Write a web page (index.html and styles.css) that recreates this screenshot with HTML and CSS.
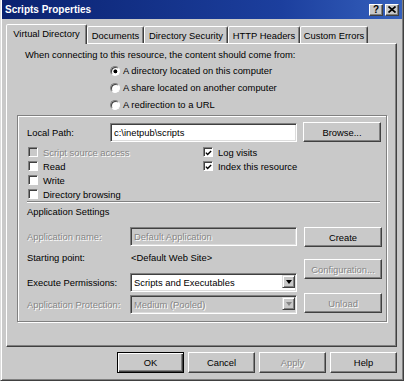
FILE: index.html
```html
<!DOCTYPE html>
<html lang="en">
<head>
    <meta charset="UTF-8">
    <title>Scripts Properties</title>
    <link rel="stylesheet" href="styles.css">
</head>
<body>
    <div class="window">
        <div class="titlebar">
            <span class="title">Scripts Properties</span>
            <div class="caption">
                <span class="cap-btn">?</span>
                <span class="cap-btn">
                    <svg width="8" height="7" viewBox="0 0 8 7"><path d="M0.5 0.5 L7.5 6.5 M7.5 0.5 L0.5 6.5" stroke="#000" stroke-width="1.7"/></svg>
                </span>
            </div>
        </div>

        <div class="client">
            <div class="tabs">
                <div class="tab active w-virtual">Virtual Directory</div>
                <div class="tab w-docs">Documents</div>
                <div class="tab w-security">Directory Security</div>
                <div class="tab w-http">HTTP Headers</div>
                <div class="tab w-errors">Custom Errors</div>
            </div>

            <div class="panel">
                <p class="intro">When connecting to this resource, the content should come from:</p>
                <div class="radios">
                    <div class="radio-row"><span class="radio checked"></span>A directory located on this computer</div>
                    <div class="radio-row"><span class="radio"></span>A share located on another computer</div>
                    <div class="radio-row"><span class="radio"></span>A redirection to a URL</div>
                </div>

                <div class="group">
                    <div class="path-row">
                        <span class="path-label">Local Path:</span>
                        <div class="field path-field">c:\inetpub\scripts</div>
                        <div class="btn side-btn">Browse...</div>
                    </div>

                    <div class="checks">
                        <div class="check-col left">
                            <div class="check-row disabled"><span class="box"></span>Script source access</div>
                            <div class="check-row"><span class="box"></span>Read</div>
                            <div class="check-row"><span class="box"></span>Write</div>
                            <div class="check-row"><span class="box"></span>Directory browsing</div>
                        </div>
                        <div class="check-col">
                            <div class="check-row"><span class="box"><svg width="8" height="8" viewBox="0 0 8 8"><path d="M1 3.6 L3 5.8 L7 1.6" fill="none" stroke="#000" stroke-width="1.6"/></svg></span>Log visits</div>
                            <div class="check-row"><span class="box"><svg width="8" height="8" viewBox="0 0 8 8"><path d="M1 3.6 L3 5.8 L7 1.6" fill="none" stroke="#000" stroke-width="1.6"/></svg></span>Index this resource</div>
                        </div>
                    </div>

                    <div class="sep"></div>
                    <div class="sect">Application Settings</div>

                    <div class="app">
                        <div class="app-fields">
                            <div class="app-row r1">
                                <span class="app-label disabled">Application name:</span>
                                <div class="field app-field off disabled">Default Application</div>
                            </div>
                            <div class="app-row r2">
                                <span class="app-label">Starting point:</span>
                                <span class="app-value">&lt;Default Web Site&gt;</span>
                            </div>
                            <div class="app-row r3">
                                <span class="app-label">Execute Permissions:</span>
                                <div class="field app-field select">Scripts and Executables<span class="drop"><i></i></span></div>
                            </div>
                            <div class="app-row r4">
                                <span class="app-label disabled">Application Protection:</span>
                                <div class="field app-field select off disabled">Medium (Pooled)<span class="drop"><i></i></span></div>
                            </div>
                        </div>
                        <div class="app-btns">
                            <div class="btn side-btn">Create</div>
                            <div class="btn side-btn disabled cfg">Configuration...</div>
                            <div class="btn side-btn disabled unload">Unload</div>
                        </div>
                    </div>
                </div>
            </div>

            <div class="actions">
                <div class="btn action default">OK</div>
                <div class="btn action">Cancel</div>
                <div class="btn action disabled">Apply</div>
                <div class="btn action">Help</div>
            </div>
        </div>
    </div>
</body>
</html>
```

FILE: styles.css
```css
:root {
    --face: #c9c9c9;
    --shadow: #808080;
    --dark: #404040;
    --light: #ffffff;
    --muted: #868686;
}

* {
    margin: 0;
    padding: 0;
    box-sizing: border-box;
}

body {
    background: var(--face);
    font-family: 'Liberation Sans', Arial, sans-serif;
    font-size: 9.4px;
    color: #000;
}

.window {
    width: 404px;
    height: 381px;
    background: var(--face);
    border: 1px solid;
    border-top: 0;
    border-color: #dcdcdc var(--dark) var(--dark) #dcdcdc;
    box-shadow: inset 1px 0 var(--light), inset -1px -1px var(--shadow);
    padding: 0 1px 1px 1px;
}

/* title bar */
.titlebar {
    height: 19px;
    display: flex;
    align-items: center;
    padding-left: 3px;
    background: linear-gradient(90deg, #0a2270, #1c3f9e 70%, #3560bc);
    color: #fff;
    font-weight: bold;
    font-size: 10px;
}

.caption {
    margin-left: auto;
    margin-right: 3px;
    display: flex;
    gap: 2px;
}

.cap-btn {
    width: 14px;
    height: 12px;
    background: var(--face);
    border: 1px solid;
    border-color: var(--light) var(--dark) var(--dark) var(--light);
    box-shadow: inset -1px -1px var(--shadow);
    display: flex;
    align-items: center;
    justify-content: center;
    color: #000;
    font-size: 10px;
    font-weight: bold;
    line-height: 1;
}

/* tabs */
.client {
    padding: 5px 5px 0 4px;
}

.tabs {
    display: flex;
    align-items: flex-end;
    height: 19px;
    position: relative;
    z-index: 1;
}

.tab {
    height: 17px;
    background: var(--face);
    border: 1px solid;
    border-bottom: 0;
    border-color: var(--light) var(--dark) transparent var(--light);
    box-shadow: inset -1px 0 var(--shadow);
    border-radius: 2px 2px 0 0;
    display: flex;
    align-items: center;
    justify-content: center;
    white-space: nowrap;
}

.tab.active {
    height: 20px;
    margin-bottom: -1px;
    padding-bottom: 2px;
}

.w-virtual { width: 81px; }
.w-docs { width: 57px; }
.w-security { width: 84px; }
.w-http { width: 72px; }
.w-errors { width: 68px; }

.panel {
    width: 391px;
    height: 304px;
    border: 1px solid;
    border-color: var(--light) var(--dark) var(--dark) var(--light);
    box-shadow: inset -1px -1px var(--shadow);
}

.intro {
    margin: 5px 0 0 18px;
    line-height: 12px;
}

.radios {
    margin: 1px 0 0 103px;
}

.radio-row {
    height: 17px;
    display: flex;
    align-items: center;
    gap: 3px;
}

.radio {
    width: 10px;
    height: 10px;
    border-radius: 50%;
    background: var(--light);
    border: 1px solid;
    border-color: var(--shadow) var(--light) var(--light) var(--shadow);
    box-shadow: inset 1px 1px var(--dark);
}

.radio.checked {
    background: radial-gradient(circle at 55% 55%, #000 1.6px, #fff 2.3px);
}

/* group box */
.group {
    margin: 2px 0 0 10px;
    width: 370px;
    height: 207px;
    border: 1px solid var(--shadow);
    box-shadow: inset 1px 1px var(--light), 1px 1px var(--light);
    padding: 6px 0 0 9px;
}

.path-row {
    display: flex;
    align-items: center;
    height: 20px;
}

.path-label {
    width: 83px;
}

.field {
    height: 19px;
    background: var(--light);
    border: 1px solid;
    border-color: var(--shadow) var(--light) var(--light) var(--shadow);
    box-shadow: inset 1px 1px var(--dark), inset -1px -1px #dcdcdc;
    display: flex;
    align-items: center;
    padding-left: 3px;
    white-space: nowrap;
}

.field.off {
    background: var(--face);
}

.path-field {
    width: 187px;
}

.btn {
    height: 20px;
    background: var(--face);
    border: 1px solid;
    border-color: var(--light) var(--dark) var(--dark) var(--light);
    box-shadow: inset -1px -1px var(--shadow);
    display: flex;
    align-items: center;
    justify-content: center;
    white-space: nowrap;
}

.side-btn {
    width: 78px;
    margin-left: 6px;
}

.disabled {
    color: var(--muted);
    text-shadow: 1px 1px 0 var(--light);
}

/* checkboxes */
.checks {
    display: flex;
    margin-top: 3px;
}

.check-col.left {
    width: 175px;
    margin-left: 1px;
}

.check-row {
    height: 14px;
    display: flex;
    align-items: center;
    gap: 5px;
}

.box {
    width: 10px;
    height: 10px;
    background: var(--light);
    border: 1px solid;
    border-color: var(--shadow) var(--light) var(--light) var(--shadow);
    box-shadow: inset 1px 1px var(--dark);
    display: flex;
    align-items: center;
    justify-content: center;
}

.box svg {
    margin: 1px 0 0 1px;
}

.check-row.disabled .box {
    background: var(--face);
}

.sep {
    height: 2px;
    margin-right: 6px;
    border-top: 1px solid var(--shadow);
    border-bottom: 1px solid var(--light);
}

.sect {
    margin-top: 3px;
    line-height: 12px;
}

/* application settings */
.app {
    display: flex;
    margin-top: 9px;
}

.app-fields {
    width: 270px;
}

.app-row {
    display: flex;
    align-items: center;
}

.app-label {
    width: 103px;
}

.app-field {
    width: 167px;
    position: relative;
}

.app-value {
    padding-left: 1px;
}

.r1 { height: 19px; }
.r2 { height: 18px; margin-top: 2px; }
.r3 { height: 19px; margin-top: 7px; }
.r4 { height: 19px; margin-top: 3px; }

.select {
    padding-right: 16px;
}

.drop {
    position: absolute;
    right: 1px;
    top: 1px;
    width: 13px;
    height: 13px;
    background: var(--face);
    border: 1px solid;
    border-color: #dcdcdc var(--dark) var(--dark) #dcdcdc;
    box-shadow: inset 1px 1px var(--light), inset -1px -1px var(--shadow);
    display: flex;
    align-items: center;
    justify-content: center;
}

.drop i {
    width: 0;
    height: 0;
    border-left: 3.5px solid transparent;
    border-right: 3.5px solid transparent;
    border-top: 4px solid #000;
}

.select.disabled .drop i {
    border-top-color: var(--muted);
}

.app-btns .side-btn {
    margin-left: 7px;
}

.app-btns .cfg { margin-top: 12px; }
.app-btns .unload { margin-top: 14px; }

/* dialog buttons */
.actions {
    display: flex;
    justify-content: flex-end;
    gap: 4px;
    margin-top: 5px;
}

.action {
    width: 67px;
    height: 21px;
}

.action.default {
    border: 1px solid #000;
    box-shadow: inset 1px 1px var(--light), inset -1px -1px var(--dark), inset -2px -2px var(--shadow);
}
```
